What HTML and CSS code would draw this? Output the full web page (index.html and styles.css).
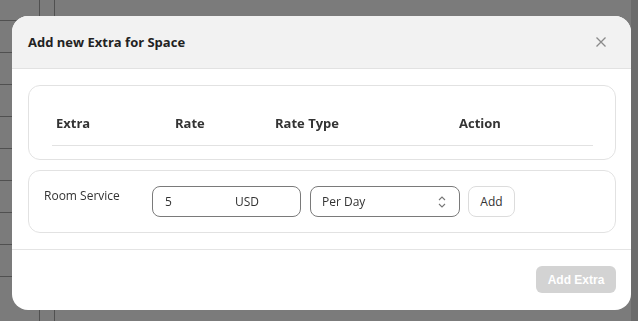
FILE: index.html
```html
<!DOCTYPE html>
<html lang="en">
<head>
    <meta charset="UTF-8">
    <meta name="viewport" content="width=device-width, initial-scale=1.0">
    <title>Add new Extra for Space</title>
    <link rel="stylesheet" href="styles.css">
</head>
<body>
    <div class="backdrop">
        <div class="sheet">
            <div class="sheet-row"></div>
            <div class="sheet-row"></div>
            <div class="sheet-row"></div>
            <div class="sheet-row"></div>
            <div class="sheet-row"></div>
            <div class="sheet-row"></div>
            <div class="sheet-row"></div>
            <div class="sheet-row"></div>
            <div class="sheet-row"></div>
        </div>
        <div class="scroll-strip"></div>
    </div>

    <div class="overlay">
        <div class="modal">
            <div class="modal-header">
                <h3>Add new Extra for Space</h3>
                <button class="close-btn" aria-label="Close">
                    <svg width="12" height="12" viewBox="0 0 12 12">
                        <path d="M1.5 1.5 L10.5 10.5 M10.5 1.5 L1.5 10.5" stroke="#8a8a8a" stroke-width="1.3" fill="none"/>
                    </svg>
                </button>
            </div>
            <div class="modal-body">
                <div class="card">
                    <div class="table-head">
                        <div class="col col-extra">Extra</div>
                        <div class="col col-rate">Rate</div>
                        <div class="col col-type">Rate Type</div>
                        <div class="col col-action">Action</div>
                    </div>
                </div>
                <div class="card row-card">
                    <div class="extra-name">Room Service</div>
                    <div class="field rate-field">
                        <span class="rate-value">5</span>
                        <span class="currency">USD</span>
                    </div>
                    <div class="field select-field">
                        <span>Per Day</span>
                        <svg width="10" height="14" viewBox="0 0 10 14">
                            <path d="M2 5 L5 2 L8 5 M2 9 L5 12 L8 9" stroke="#777" stroke-width="1.1" fill="none"/>
                        </svg>
                    </div>
                    <button class="add-btn">Add</button>
                </div>
            </div>
            <div class="modal-footer">
                <button class="submit-btn" disabled>Add Extra</button>
            </div>
        </div>
    </div>
</body>
</html>
```

FILE: styles.css
```css
html {
    overflow: hidden;
}
body {
    margin: 0;
    font-family: "Open Sans", "Noto Sans", sans-serif;
    background-color: #7b7b7b;
    width: 638px;
    height: 321px;
    overflow: hidden;
}
.backdrop {
    display: flex;
    height: 321px;
}
.sheet {
    width: 40px;
    border-right: 1px solid #505050;
    padding-top: 20px;
    box-sizing: border-box;
}
.sheet-row {
    height: 31px;
    border-top: 1px solid #505050;
}
.scroll-strip {
    margin-left: 14px;
    width: 1px;
    background-color: #505050;
}
.overlay {
    position: fixed;
    top: 0;
    left: 0;
    width: 638px;
    height: 321px;
    padding: 16px 7px 11px 12px;
    box-sizing: border-box;
    background: linear-gradient(to right, transparent 631px, #6b6b6b 631px);
}
.modal {
    height: 294px;
    background-color: #fff;
    border-radius: 16px;
    overflow: hidden;
    display: flex;
    flex-direction: column;
}
.modal-header {
    height: 52px;
    background-color: #f2f2f2;
    border-bottom: 1px solid #e2e2e2;
    display: flex;
    align-items: center;
    justify-content: space-between;
    padding: 0 24px 0 16px;
}
.modal-header h3 {
    margin: 0;
    font-size: 13px;
    font-weight: 700;
    color: #222;
}
.close-btn {
    border: none;
    background: none;
    padding: 0;
    display: flex;
}
.modal-body {
    padding: 16px 15px 16px 16px;
    border-bottom: 1px solid #e4e4e4;
    display: flex;
    flex-direction: column;
    gap: 10px;
}
.card {
    border: 1px solid #e2e2e2;
    border-radius: 12px;
    padding: 28px 22px 13px 23px;
}
.table-head {
    display: flex;
    border-bottom: 1px solid #e2e2e2;
    padding-bottom: 13px;
}
.col {
    font-size: 13px;
    font-weight: 700;
    color: #333;
    line-height: 18px;
    padding-left: 4px;
}
.col-extra { width: 115px; }
.col-rate { width: 96px; }
.col-type { width: 180px; }
.col-action { flex: 1; }
.row-card {
    display: flex;
    align-items: flex-start;
    padding: 15px;
}
.extra-name {
    width: 108px;
    font-size: 12px;
    color: #333;
    line-height: 18px;
    padding-top: 1px;
}
.field {
    height: 31px;
    box-sizing: border-box;
    border: 1px solid #7a7a7a;
    border-radius: 8px;
    display: flex;
    align-items: center;
    font-size: 12px;
    color: #333;
}
.rate-field {
    width: 149px;
    padding-left: 12px;
}
.rate-value {
    width: 70px;
}
.select-field {
    width: 150px;
    margin-left: 9px;
    padding: 0 12px 0 11px;
    justify-content: space-between;
}
.add-btn {
    margin-left: 8px;
    width: 47px;
    height: 31px;
    border: 1px solid #dcdcdc;
    border-radius: 8px;
    background: #fff;
    font-family: inherit;
    font-size: 12px;
    color: #333;
}
.modal-footer {
    flex: 1;
    display: flex;
    justify-content: flex-end;
    padding: 16px 15px 0 0;
}
.submit-btn {
    width: 80px;
    height: 27px;
    border: none;
    border-radius: 6px;
    background-color: #d3d3d3;
    color: #fff;
    font-family: "Liberation Sans", Arial, sans-serif;
    font-weight: 700;
    font-size: 12px;
}
```
